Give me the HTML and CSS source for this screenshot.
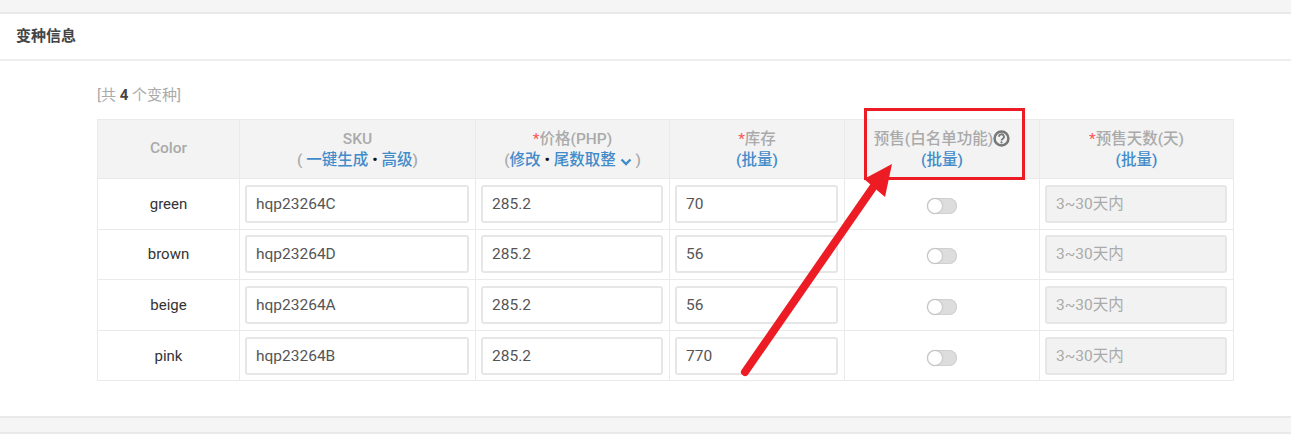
FILE: index.html
```html
<!DOCTYPE html>
<html lang="en">
<head>
  <meta charset="UTF-8" />
  <title>变种信息</title>
  <link rel="stylesheet" href="styles.css">
</head>
<body>
  <div class="panel">
    <h3 class="panel-title">变种信息</h3>
    <div class="panel-body">
      <p class="count">[共 <b>4</b> 个变种]</p>
      <table class="variants">
        <colgroup>
          <col class="c1"><col class="c2"><col class="c3"><col class="c4"><col class="c5"><col class="c6">
        </colgroup>
        <thead>
          <tr>
            <th class="color-head">Color</th>
            <th>SKU<br>( <a>一键生成</a> <i class="dot">•</i> <a>高级</a>)</th>
            <th><span class="req">*</span>价格(PHP)<br>(<a>修改</a> <i class="dot">•</i> <a>尾数取整</a>
              <svg class="chev" width="12" height="8" viewBox="0 0 12 8"><path d="M1.5 1.5 6 6 10.5 1.5" fill="none" stroke="#428bca" stroke-width="2.4"/></svg> )</th>
            <th><span class="req">*</span>库存<br><a>(批量)</a></th>
            <th>预售(白名单功能)<svg class="help" width="17" height="17" viewBox="0 0 16 16"><circle cx="8" cy="8" r="6.5" fill="none" stroke="#777" stroke-width="2.4"/><path d="M5.7 6.4a2.3 2.3 0 1 1 3.5 1.9c-.8.5-1.2.9-1.2 1.6" fill="none" stroke="#777" stroke-width="1.7"/><circle cx="8" cy="11.7" r="1" fill="#777"/></svg><br><a>(批量)</a></th>
            <th><span class="req">*</span>预售天数(天)<br><a>(批量)</a></th>
          </tr>
        </thead>
        <tbody>
          <tr>
            <td class="name">green</td>
            <td><input class="field" value="hqp23264C"></td>
            <td><input class="field" value="285.2"></td>
            <td><input class="field" value="70"></td>
            <td><span class="switch"></span></td>
            <td><input class="field" placeholder="3~30天内" disabled></td>
          </tr>
          <tr>
            <td class="name">brown</td>
            <td><input class="field" value="hqp23264D"></td>
            <td><input class="field" value="285.2"></td>
            <td><input class="field" value="56"></td>
            <td><span class="switch"></span></td>
            <td><input class="field" placeholder="3~30天内" disabled></td>
          </tr>
          <tr>
            <td class="name">beige</td>
            <td><input class="field" value="hqp23264A"></td>
            <td><input class="field" value="285.2"></td>
            <td><input class="field" value="56"></td>
            <td><span class="switch"></span></td>
            <td><input class="field" placeholder="3~30天内" disabled></td>
          </tr>
          <tr>
            <td class="name">pink</td>
            <td><input class="field" value="hqp23264B"></td>
            <td><input class="field" value="285.2"></td>
            <td><input class="field" value="770"></td>
            <td><span class="switch"></span></td>
            <td><input class="field" placeholder="3~30天内" disabled></td>
          </tr>
        </tbody>
      </table>
    </div>
  </div>
  <div class="panel-next"></div>

  <!-- annotation drawn over the screenshot -->
  <svg class="annotation" width="1291" height="438" viewBox="0 0 1291 438">
    <rect x="865.5" y="109.5" width="158" height="69" fill="none" stroke="#ed1c24" stroke-width="3"/>
    <path d="M745 372 874 186" fill="none" stroke="#ed1c24" stroke-width="8" stroke-linecap="round"/>
    <path d="M892 164 864 179 885 197Z" fill="#ed1c24"/>
  </svg>
</body>
</html>
```

FILE: styles.css
```css
body {
  margin: 0;
  height: 438px;
  overflow: hidden;
  background-color: #f5f5f5;
  font-family: Roboto, "Noto Sans CJK SC", sans-serif;
  font-size: 15px;
  color: #555;
}
.panel {
  margin-top: 12px;
  background: #fff;
  border-top: 2px solid #e9e9e9;
  border-bottom: 2px solid #e9e9e9;
}
.panel-title {
  margin: 0;
  height: 45px;
  line-height: 45px;
  padding-left: 16px;
  font-size: 15px;
  font-weight: bold;
  color: #444;
  border-bottom: 2px solid #eee;
}
.panel-body {
  height: 355px;
  padding-left: 97px;
}
.count {
  margin: 0;
  padding-top: 24px;
  height: 34px;
  line-height: 20px;
  font-size: 15px;
  color: #aaa;
}
.count b {
  color: #444;
}
.variants {
  width: 1136px;
  table-layout: fixed;
  border-collapse: collapse;
}
.c1 { width: 142px; }
.c2 { width: 236px; }
.c3 { width: 194px; }
.c4 { width: 175px; }
.c5 { width: 195px; }
.c6 { width: 194px; }
.variants th, .variants td {
  border: 1px solid #eaeaea;
  text-align: center;
  vertical-align: middle;
}
.variants th {
  box-sizing: border-box;
  height: 59px;
  padding: 2px 0 0;
  background: #f3f3f3;
  color: #aaa;
  font-size: 15.5px;
  font-weight: 500;
  line-height: 21px;
}
.variants th.color-head {
  padding: 0 0 2px;
}
.variants th a {
  color: #428bca;
}
.variants td {
  height: 49.6px;
  padding: 0 6px 0 5px;
}
.variants td.name {
  padding: 0;
  color: #333;
}
.req {
  color: #f55;
  font-weight: normal;
}
.dot {
  font-style: normal;
  color: #111;
}
.chev {
  vertical-align: -1px;
}
.help {
  vertical-align: -3px;
}
.field {
  display: block;
  box-sizing: border-box;
  width: 100%;
  height: 38px;
  padding: 0 9px;
  border: 2px solid #e6e6e6;
  border-radius: 3px;
  background: #fff;
  font: 15.5px Roboto, "Noto Sans CJK SC", sans-serif;
  color: #555;
}
.field:disabled {
  background: #f2f2f2;
}
.field::placeholder {
  color: #aaa;
  opacity: 1;
}
.switch {
  display: inline-block;
  position: relative;
  top: 1px;
  width: 30px;
  height: 16px;
  border-radius: 8px;
  background: #ddd;
  box-shadow: inset 0 0 0 1px #d0d0d0;
  vertical-align: middle;
}
.switch::before {
  content: "";
  position: absolute;
  left: 1px;
  top: 1px;
  width: 14px;
  height: 14px;
  border-radius: 50%;
  background: #fff;
  box-shadow: 0 0 2px #999;
}
.annotation {
  position: absolute;
  left: 0;
  top: 0;
  pointer-events: none;
}
.panel-next {
  margin-top: 14px;
  height: 10px;
  background: #fff;
  border-top: 2px solid #e9e9e9;
}
```
